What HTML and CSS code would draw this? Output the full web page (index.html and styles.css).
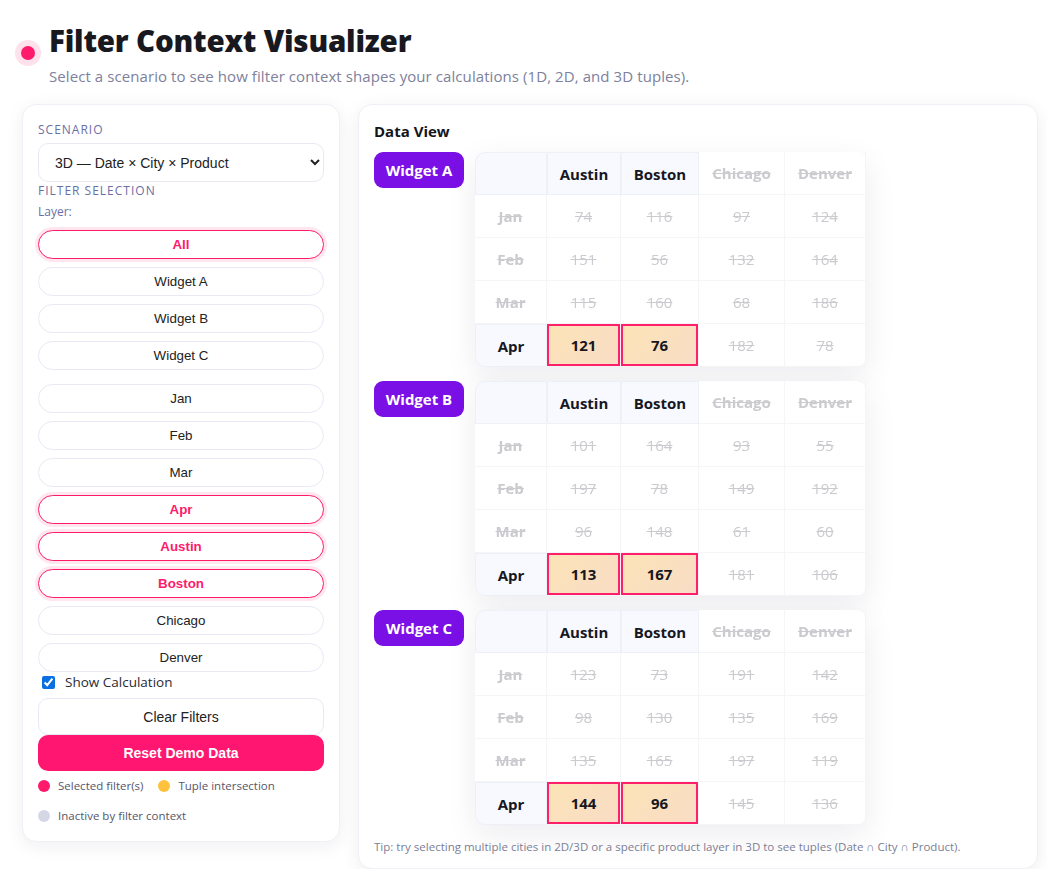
FILE: index.html
```html
<!DOCTYPE html>
<html lang="en">
<head>
<meta charset="utf-8">
<title>Filter Context Visualizer</title>
<link rel="stylesheet" href="styles.css">
</head>
<body>
<header class="page-header">
  <span class="brand-dot"></span>
  <div class="titles">
    <h1>Filter Context Visualizer</h1>
    <p class="subtitle">Select a scenario to see how filter context shapes your calculations (1D, 2D, and 3D tuples).</p>
  </div>
</header>

<main class="layout">
  <aside class="panel controls">
    <div class="section-label">SCENARIO</div>
    <select class="scenario">
      <option>3D — Date × City × Product</option>
    </select>
    <div class="section-label filter-label">FILTER SELECTION</div>
    <div class="sub-label">Layer:</div>
    <div class="btn-group">
      <button class="chip selected">All</button>
      <button class="chip">Widget A</button>
      <button class="chip">Widget B</button>
      <button class="chip">Widget C</button>
    </div>
    <div class="btn-group second">
      <button class="chip">Jan</button>
      <button class="chip">Feb</button>
      <button class="chip">Mar</button>
      <button class="chip selected">Apr</button>
      <button class="chip selected">Austin</button>
      <button class="chip selected">Boston</button>
      <button class="chip">Chicago</button>
      <button class="chip">Denver</button>
    </div>
    <label class="check-row"><input type="checkbox" checked> <span>Show Calculation</span></label>
    <button class="wide-btn clear">Clear Filters</button>
    <button class="wide-btn reset">Reset Demo Data</button>
    <div class="legend">
      <span class="legend-item"><i class="ldot pink"></i>Selected filter(s)</span>
      <span class="legend-item"><i class="ldot yellow"></i>Tuple intersection</span>
      <span class="legend-item"><i class="ldot gray"></i>Inactive by filter context</span>
    </div>
  </aside>

  <section class="panel data">
    <h2>Data View</h2>

    <div class="widget">
      <div class="badge">Widget A</div>
      <table class="grid">
        <colgroup><col class="c0"><col class="c1"><col class="c2"><col class="c3"><col class="c4"></colgroup>
        <tr><th class="corner"></th><th class="on">Austin</th><th class="on">Boston</th><th class="off">Chicago</th><th class="off">Denver</th></tr>
        <tr><th class="off">Jan</th><td class="off">74</td><td class="off">116</td><td class="off">97</td><td class="off">124</td></tr>
        <tr><th class="off">Feb</th><td class="off">151</td><td class="off">56</td><td class="off">132</td><td class="off">164</td></tr>
        <tr><th class="off">Mar</th><td class="off">115</td><td class="off">160</td><td class="off">68</td><td class="off">186</td></tr>
        <tr><th class="on last">Apr</th><td class="hit">121</td><td class="hit">76</td><td class="off">182</td><td class="off">78</td></tr>
      </table>
    </div>

    <div class="widget">
      <div class="badge">Widget B</div>
      <table class="grid">
        <colgroup><col class="c0"><col class="c1"><col class="c2"><col class="c3"><col class="c4"></colgroup>
        <tr><th class="corner"></th><th class="on">Austin</th><th class="on">Boston</th><th class="off">Chicago</th><th class="off">Denver</th></tr>
        <tr><th class="off">Jan</th><td class="off">101</td><td class="off">164</td><td class="off">93</td><td class="off">55</td></tr>
        <tr><th class="off">Feb</th><td class="off">197</td><td class="off">78</td><td class="off">149</td><td class="off">192</td></tr>
        <tr><th class="off">Mar</th><td class="off">96</td><td class="off">148</td><td class="off">61</td><td class="off">60</td></tr>
        <tr><th class="on last">Apr</th><td class="hit">113</td><td class="hit">167</td><td class="off">181</td><td class="off">106</td></tr>
      </table>
    </div>

    <div class="widget">
      <div class="badge">Widget C</div>
      <table class="grid">
        <colgroup><col class="c0"><col class="c1"><col class="c2"><col class="c3"><col class="c4"></colgroup>
        <tr><th class="corner"></th><th class="on">Austin</th><th class="on">Boston</th><th class="off">Chicago</th><th class="off">Denver</th></tr>
        <tr><th class="off">Jan</th><td class="off">123</td><td class="off">73</td><td class="off">191</td><td class="off">142</td></tr>
        <tr><th class="off">Feb</th><td class="off">98</td><td class="off">130</td><td class="off">135</td><td class="off">169</td></tr>
        <tr><th class="off">Mar</th><td class="off">135</td><td class="off">165</td><td class="off">197</td><td class="off">119</td></tr>
        <tr><th class="on last">Apr</th><td class="hit">144</td><td class="hit">96</td><td class="off">145</td><td class="off">136</td></tr>
      </table>
    </div>

    <p class="tip">Tip: try selecting multiple cities in 2D/3D or a specific product layer in 3D to see tuples (Date ∩ City ∩ Product).</p>
  </section>
</main>
</body>
</html>
```

FILE: styles.css
```css
* { box-sizing: border-box; }

html, body { background: #ffffff; }

body {
  margin: 0;
  font-family: "Open Sans", "Noto Sans", sans-serif;
  color: #1b1b24;
}

.page-header {
  display: flex;
  align-items: flex-start;
  gap: 14px;
  padding: 23px 0 0 21px;
  height: 104px;
}

.brand-dot {
  flex: none;
  width: 14px;
  height: 14px;
  margin-top: 23px;
  border-radius: 50%;
  background: #ff1a6c;
  box-shadow: 0 0 0 6px #ffe1ec;
}

.titles h1 {
  margin: 0;
  font-size: 29.5px;
  line-height: 36px;
  font-weight: 800;
  color: #18181f;
  letter-spacing: -0.2px;
}

.subtitle {
  margin: 7px 0 0;
  font-size: 15px;
  line-height: 20px;
  letter-spacing: 0.08px;
  color: #7d819c;
}

.layout {
  display: grid;
  grid-template-columns: 318px 680px;
  gap: 18px;
  padding-left: 22px;
  align-items: start;
}

.panel {
  background: #fff;
  border-radius: 14px;
  border: 1px solid #f0f0f6;
  box-shadow: 0 4px 18px rgba(30, 30, 70, 0.07);
}

/* ---------- controls ---------- */
.controls {
  padding: 17px 15px 16px;
  display: flex;
  flex-direction: column;
}

.section-label {
  font-size: 12px;
  line-height: 16px;
  letter-spacing: 1px;
  color: #6a6fa6;
}

.scenario {
  margin-top: 5px;
  height: 39px;
  width: 100%;
  border: 1px solid #e9e9f4;
  border-radius: 10px;
  background: #fff;
  padding: 0 12px;
  font-family: "Liberation Sans", Arial, sans-serif;
  font-size: 14px;
  color: #222;
}

.filter-label { margin-top: 1px; }

.sub-label {
  margin-top: 5px;
  font-size: 12px;
  line-height: 16px;
  color: #6a6fa6;
}

.btn-group {
  display: flex;
  flex-direction: column;
  gap: 8px;
  margin-top: 10px;
}

.btn-group.second { margin-top: 14px; }

.chip {
  height: 29px;
  border-radius: 999px;
  border: 1px solid #e8e9f4;
  background: #fff;
  font-family: "Liberation Sans", Arial, sans-serif;
  font-size: 13.33px;
  color: #222;
}

.chip.selected {
  border: 1.5px solid #ff1a6c;
  color: #ff1a6c;
  font-weight: 700;
  box-shadow: 0 0 0 3px #ffe6ef;
}

.check-row {
  display: flex;
  align-items: center;
  gap: 10px;
  margin-top: 0;
  padding-left: 4px;
  font-size: 13.5px;
  line-height: 20px;
  color: #2a2a33;
}

.check-row input {
  margin: 0;
  width: 13px;
  height: 13px;
  accent-color: #0a6fe0;
}

.wide-btn {
  width: 100%;
  font-family: "Liberation Sans", Arial, sans-serif;
  font-size: 14px;
  border-radius: 10px;
}

.wide-btn.clear {
  margin-top: 6px;
  height: 37px;
  border: 1px solid #e8e9f4;
  background: #fff;
  color: #222;
}

.wide-btn.reset {
  height: 36px;
  border: none;
  background: #ff1670;
  color: #fff;
  font-weight: 700;
}

.legend {
  display: flex;
  flex-wrap: wrap;
  gap: 12px 15px;
  margin-top: 6px;
  font-size: 11.5px;
  color: #55566a;
}

.legend-item {
  display: flex;
  align-items: center;
  gap: 8px;
  line-height: 18px;
}

.ldot {
  width: 12px;
  height: 12px;
  border-radius: 50%;
  display: inline-block;
}
.ldot.pink { background: #ff1a6c; }
.ldot.yellow { background: #ffc23e; }
.ldot.gray { background: #d6d7e6; }

/* ---------- data view ---------- */
.data {
  padding: 16px 15px 13px;
}

.data h2 {
  margin: 0 0 11px;
  font-size: 15px;
  line-height: 20px;
  font-weight: 700;
  color: #15151c;
}

.widget {
  display: flex;
  align-items: flex-start;
  gap: 11px;
  margin-bottom: 14px;
}

.badge {
  flex: none;
  width: 90px;
  height: 36px;
  border-radius: 9px;
  background: #7a0fe6;
  color: #fff;
  font-weight: 700;
  font-size: 15px;
  line-height: 36px;
  text-align: center;
}

.grid {
  border-collapse: separate;
  border-spacing: 0;
  table-layout: fixed;
  width: 391px;
  border-radius: 10px;
  box-shadow: 0 10px 32px rgba(30, 30, 60, 0.08);
  background: #fff;
}

.c0 { width: 72px; }
.c1 { width: 74px; }
.c2 { width: 78px; }
.c3 { width: 86px; }
.c4 { width: 81px; }

.grid th, .grid td {
  height: 43px;
  padding: 0;
  text-align: center;
  font-size: 15px;
  border-right: 1px solid #f5f5f8;
  border-bottom: 1px solid #f5f5f8;
}

.grid th { font-weight: 700; }
.grid td { font-weight: 400; }

.grid .corner {
  background: #f8f9ff;
  border: 1px solid #eef0f8;
  border-radius: 10px 0 0 0;
}

.grid th.on {
  background: #f8f9ff;
  border: 1px solid #eef0f8;
  color: #17171f;
}

.grid th.on.last {
  border-radius: 0 0 0 10px;
}

.grid .off {
  color: #cbcbcf;
  text-decoration: line-through;
  text-decoration-thickness: 1px;
  filter: blur(0.4px);
}

.grid td.hit {
  background: linear-gradient(135deg, #fce4b6 0%, #f8dcc6 100%);
  box-shadow: inset 0 0 0 2px #ff1f6b;
  font-weight: 700;
  color: #17171f;
}

.tip {
  margin: 4px 0 0;
  font-size: 11.5px;
  line-height: 16px;
  color: #7b7e96;
}
```
